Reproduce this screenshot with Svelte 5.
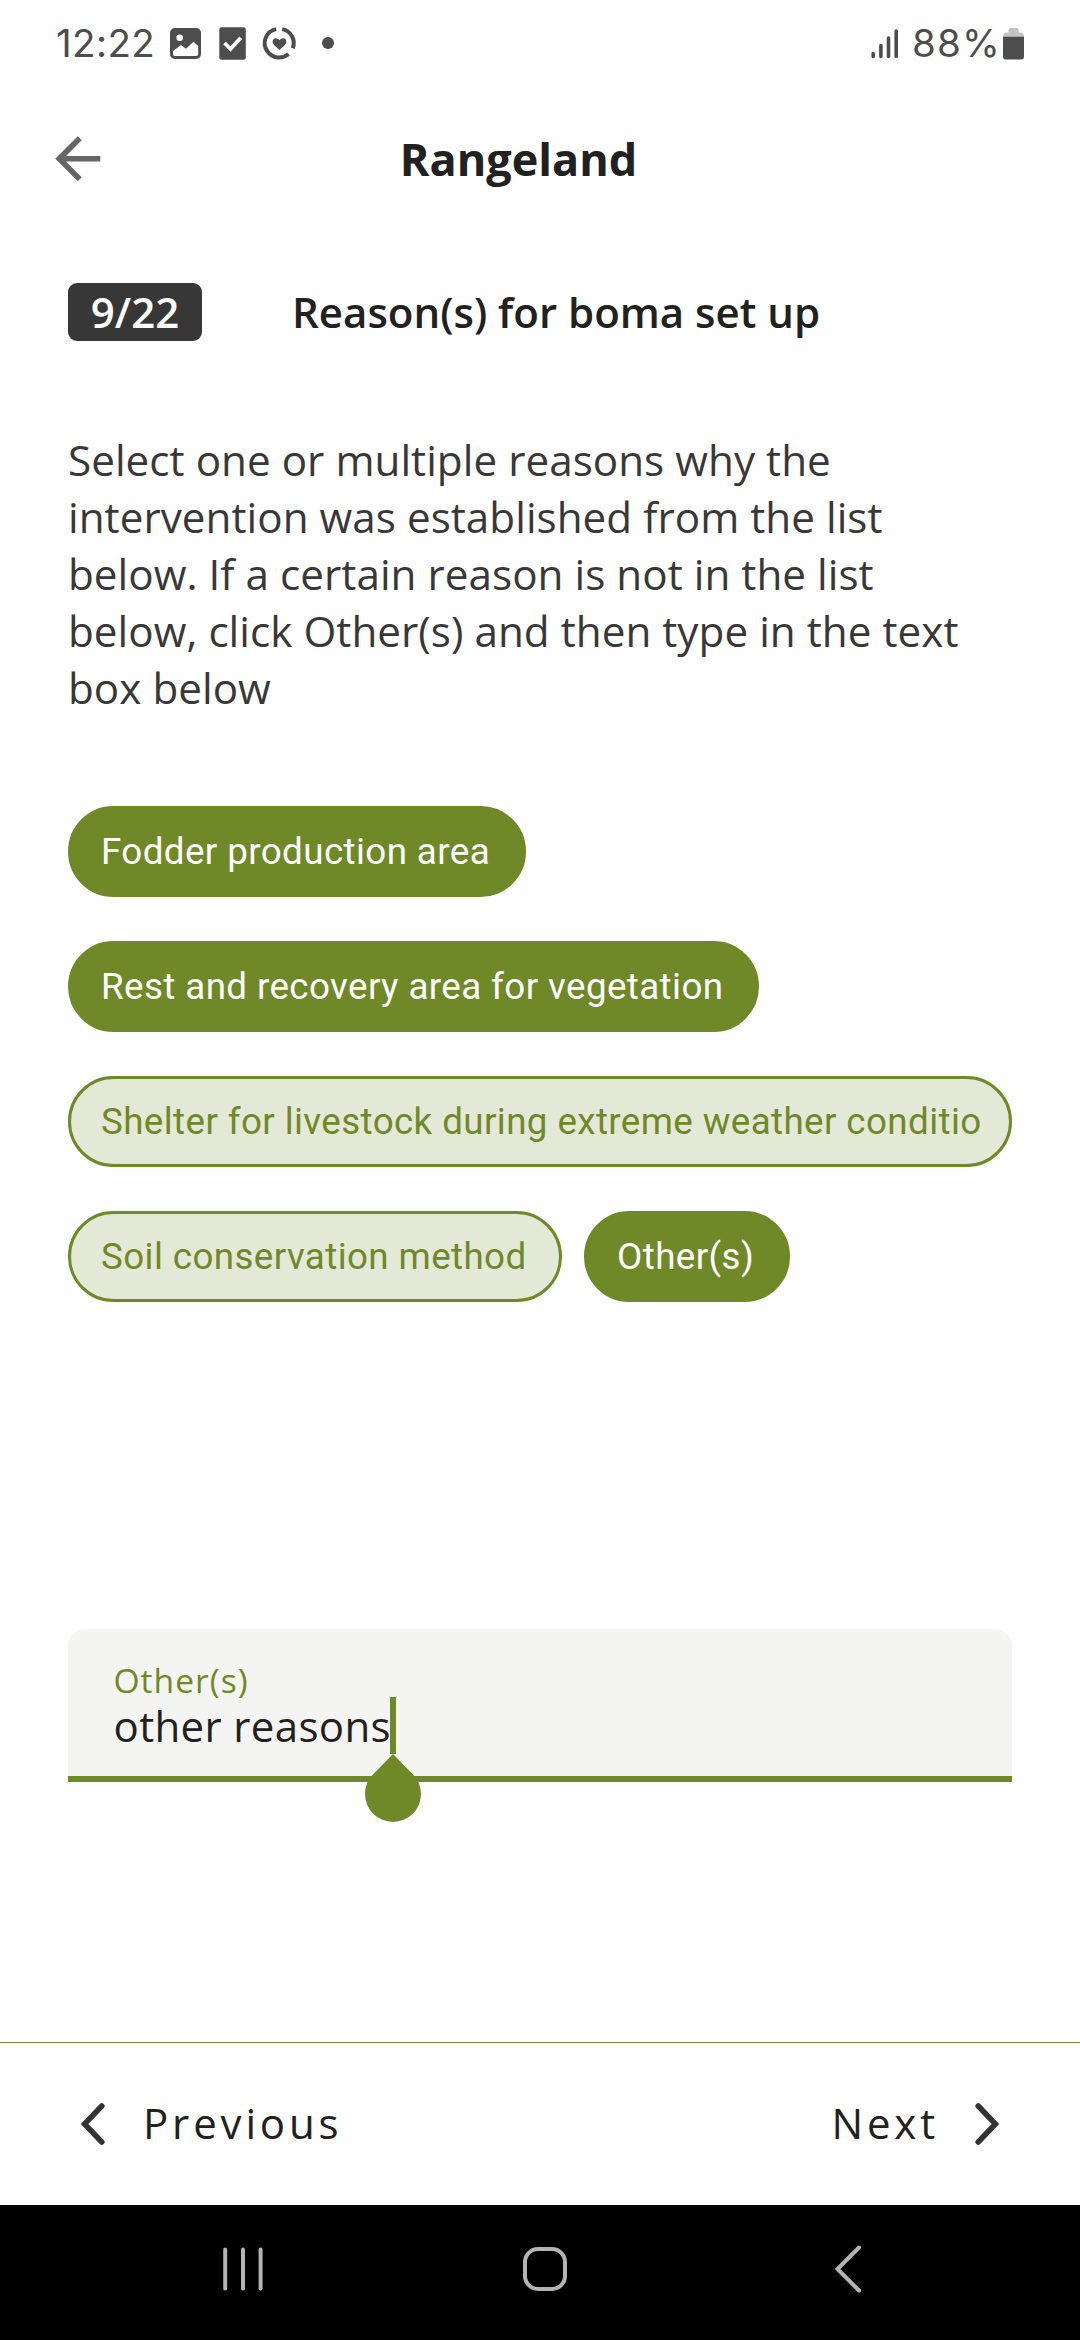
<script>
  let reasons = $state([
    [{ label: 'Fodder production area', selected: true }],
    [{ label: 'Rest and recovery area for vegetation', selected: true }],
    [{ label: 'Shelter for livestock during extreme weather conditio', selected: false, full: true }],
    [
      { label: 'Soil conservation method', selected: false },
      { label: 'Other(s)', selected: true }
    ]
  ]);
</script>

<div class="screen">
  <div class="status">
    <span class="clock">12:22</span>
    <svg class="notes" width="170" height="40" viewBox="0 0 170 40">
      <rect x="0" y="5" width="31" height="31" rx="5" />
      <circle class="paper" cx="9.7" cy="14.8" r="3.3" />
      <path class="paper" d="M3 28l8-6 5 3.700 7.500-7L28.200 23v8a2 2 0 0 1-2 2H5a2 2 0 0 1-2-2z" />
      <rect x="49.300" y="4.200" width="26.500" height="32.500" rx="2.500" />
      <path class="tick" d="M54.500 20l6 6 10.300-11.300" />
      <path class="arc" d="M106.200 6.100A14.200 14.200 0 0 0 97.500 28.500M97.500 28.500A14.200 14.200 0 0 0 118.500 31M112.200 6.100A14.200 14.200 0 0 1 122.700 25.300" />
      <path d="M109.500 27l-5.200-4.700c-3-3-1.700-7 1.500-7 1.700 0 3 1 3.700 2 .7-1 2-2 3.700-2 3.200 0 4.500 4 1.500 7z" />
      <circle cx="158" cy="20" r="6" />
    </svg>
    <svg class="signal" width="28" height="30" viewBox="0 0 28 30">
      <path d="M2.200 24.500v3M9.900 16.500v11M17.500 9v18.500M25.200 2v25.500" />
    </svg>
    <span class="charge">88%</span>
    <svg class="battery" width="21" height="32" viewBox="0 0 21 32">
      <path class="empty" d="M5.500 2a2 2 0 0 1 2-2h6a2 2 0 0 1 2 2v2.500H17a4 4 0 0 1 4 4V12H0V8.500a4 4 0 0 1 4-4h1.500z" />
      <path d="M0 8.700h21V28.500a3 3 0 0 1-3 3H3a3 3 0 0 1-3-3z" />
    </svg>
  </div>

  <header>
    <svg class="back" width="67.500" height="67.500" viewBox="0 0 24 24">
      <path d="M20 11H7.830l5.590-5.590L12 4l-8 8 8 8 1.410-1.410L7.830 13H20z" />
    </svg>
    <h1>Rangeland</h1>
  </header>

  <div class="step">
    <span class="badge">9/22</span>
    <h2>Reason(s) for boma set up</h2>
  </div>

  <p class="help">Select one or multiple reasons why the<br />intervention was established from the list<br />below. If a certain reason is not in the list<br />below, click Other(s) and then type in the text<br />box below</p>

  <div class="chips">
    {#each reasons as row}
      <div class="chip-row">
        {#each row as reason}
          <button
            class="chip"
            class:selected={reason.selected}
            class:full={reason.full}
            onclick={() => (reason.selected = !reason.selected)}>{reason.label}</button>
        {/each}
      </div>
    {/each}
  </div>

  <div class="field">
    <span class="label">Other(s)</span>
    <div class="entry">
      <span class="value">other reasons</span>
      <span class="caret">
        <svg class="handle" width="56" height="68" viewBox="0 0 56 68">
          <path d="M28 0L47.800 20.200A28 28 0 1 1 8.200 20.200z" />
        </svg>
      </span>
    </div>
  </div>

  <footer>
    <div class="nav">
      <svg width="24" height="42" viewBox="0 0 24 42"><path d="M20.800 3L3.500 21l17.300 18" /></svg>
      <span>Previous</span>
    </div>
    <div class="nav next">
      <span>Next</span>
      <svg width="24" height="42" viewBox="0 0 24 42"><path d="M3.200 3L20.500 21 3.200 39" /></svg>
    </div>
  </footer>

  <div class="system">
    <svg width="42" height="44" viewBox="0 0 42 44"><path d="M2.200 2.500v39M20 2.500v39M37.600 2.500v39" /></svg>
    <svg class="home" width="46" height="46" viewBox="0 0 46 46"><rect x="3" y="3" width="40" height="40" rx="13" /></svg>
    <svg width="28" height="48" viewBox="0 0 28 48"><path d="M25 2.500L3.500 24 25 45.500" /></svg>
  </div>
</div>

<style>
  :global(body) {
    background: #fefefe;
  }
  .screen {
    width: 1080px;
    height: 2340px;
    display: flex;
    flex-direction: column;
    overflow: hidden;
    background: #fefefe;
    color: #212121;
    font: 400 42px/57px "Open Sans", sans-serif;
  }
  svg {
    display: block;
    flex: none;
  }
  .status {
    height: 87px;
    display: flex;
    align-items: center;
    padding: 0 56px;
    fill: #4d4d4d;
    color: #4d4d4d;
    font: 400 38.500px/46px Inter, sans-serif;
  }
  .clock,
  .charge {
    margin-top: -2px;
    white-space: nowrap;
  }
  .clock {
    width: 114px;
    letter-spacing: 0.400px;
  }
  .notes {
    margin-top: -1px;
  }
  .paper {
    fill: #fefefe;
  }
  .tick {
    fill: none;
    stroke: #fefefe;
    stroke-width: 3.800;
  }
  .arc {
    fill: none;
    stroke: #4d4d4d;
    stroke-width: 4;
  }
  .signal {
    margin-left: auto;
    fill: none;
    stroke: #4d4d4d;
    stroke-width: 3.600;
    stroke-linecap: round;
  }
  .charge {
    margin-left: 13px;
    width: 91px;
    letter-spacing: 1.200px;
  }
  .empty {
    fill: #c4c4c4;
  }
  header {
    height: 143px;
    display: grid;
    grid-template-columns: 112px 1fr 112px;
    align-items: center;
  }
  .back {
    margin-left: 43.750px;
    fill: #666;
  }
  h1 {
    margin: 0;
    padding-right: 43px;
    text-align: center;
    font-size: 45px;
    line-height: 60px;
    font-weight: 700;
  }
  .step {
    display: flex;
    align-items: flex-start;
    margin: 53px 68px 0;
    height: 58px;
  }
  .badge {
    width: 134px;
    height: 58px;
    border-radius: 9px;
    background: #373737;
    color: #fff;
    text-align: center;
    font-weight: 600;
  }
  h2 {
    margin: 0 0 0 90px;
    font-size: 42px;
    font-weight: 600;
    white-space: nowrap;
  }
  .help {
    margin: 90px 68px 0;
    font-size: 42.200px;
    letter-spacing: 0.040px;
    white-space: nowrap;
    color: #383838;
  }
  .chips {
    display: flex;
    flex-direction: column;
    gap: 44px;
    margin: 90px 68px 0;
  }
  .chip-row {
    display: flex;
    gap: 22px;
  }
  .chip {
    box-sizing: border-box;
    height: 91px;
    padding: 0 32.500px 0 30px;
    border: 3px solid #6f8929;
    border-radius: 46px;
    background: #e4e8d7;
    color: #6f8929;
    font: 400 36.750px/43px Roboto, sans-serif;
    letter-spacing: 0.400px;
    text-align: left;
    white-space: nowrap;
  }
  .chip.full {
    width: 944px;
  }
  .chip.selected {
    background: #6f8929;
    color: #fff;
  }
  .field {
    box-sizing: border-box;
    height: 153px;
    margin: 327px 68px 0;
    padding: 32px 46px 0 45.500px;
    border-radius: 17px 17px 0 0;
    border-bottom: 6px solid #6f8929;
    background: #f4f4f2;
  }
  .label {
    display: block;
    height: 36px;
    font-size: 33.600px;
    line-height: 38px;
    letter-spacing: 1px;
    color: #6f8929;
  }
  .entry {
    display: flex;
    height: 57px;
    letter-spacing: 0.360px;
  }
  .value {
    width: 276.500px;
    white-space: nowrap;
  }
  .caret {
    position: relative;
    width: 6px;
    height: 57px;
    background: #6f8929;
  }
  .handle {
    position: absolute;
    left: -25px;
    top: 57px;
    fill: #6f8929;
  }
  footer {
    box-sizing: border-box;
    height: 163px;
    margin-top: auto;
    padding: 0 81px;
    border-top: 1px solid #75854a;
    display: flex;
    align-items: center;
    justify-content: space-between;
    letter-spacing: 3.850px;
  }
  .nav {
    display: flex;
    align-items: center;
    gap: 38px;
  }
  .nav.next {
    gap: 36px;
  }
  .nav span {
    margin-top: -3px;
  }
  .nav svg {
    fill: none;
    stroke: #333;
    stroke-width: 5.500;
    stroke-linecap: round;
    stroke-linejoin: miter;
  }
  .system {
    box-sizing: border-box;
    height: 135px;
    display: flex;
    align-items: center;
    justify-content: space-between;
    padding: 0 218px 7px 223px;
    background: #000;
  }
  .system svg {
    fill: none;
    stroke: #b4b4b4;
    stroke-width: 4;
    stroke-linecap: round;
  }
  .home {
    margin-right: 9px;
  }
</style>
